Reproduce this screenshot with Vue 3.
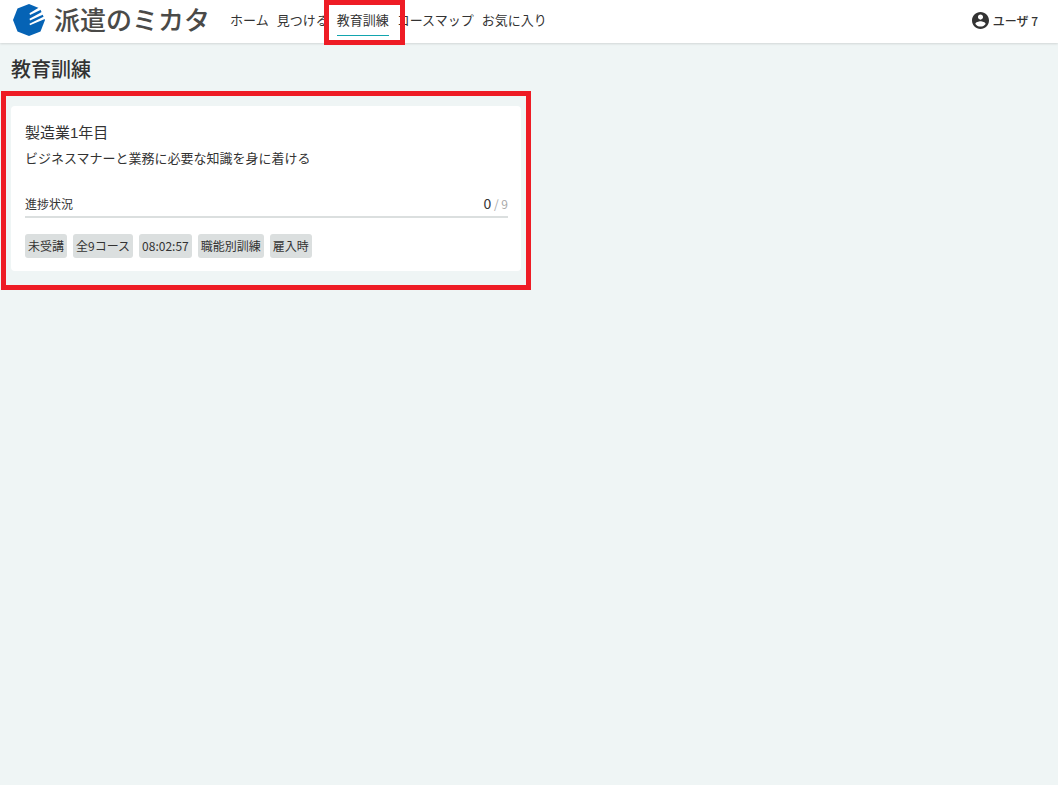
<script setup>
const navItems = [
  { label: 'ホーム' },
  { label: '見つける' },
  { label: '教育訓練', current: true },
  { label: 'コースマップ' },
  { label: 'お気に入り' },
]

const course = {
  title: '製造業1年目',
  description: 'ビジネスマナーと業務に必要な知識を身に着ける',
  done: 0,
  total: 9,
  tags: ['未受講', '全9コース', '08:02:57', '職能別訓練', '雇入時'],
}
</script>

<template>
  <div class="page">
    <header class="header">
      <a class="brand" href="#">
        <svg class="brand-mark" viewBox="0 0 34 34" aria-hidden="true">
          <path fill="#0563b5" d="M17 1 28 5.500 33 17 28.500 28.500 17 33 5.500 28.500 1 17 5.500 5.500Z" />
          <path
            fill="#fff"
            d="M17.500 10.200 29.500 3 32 5.200 18 12Z M17.500 15.700 32.500 7.500 34.500 10 18 17.500Z M17.500 20.700 34 12.500V15.500L18 22.300Z"
          />
        </svg>
        <span class="brand-name">派遣のミカタ</span>
      </a>
      <nav class="nav">
        <a
          v-for="item in navItems"
          :key="item.label"
          href="#"
          class="nav-link"
          :class="{ current: item.current }"
          :aria-current="item.current ? 'page' : undefined"
        >{{ item.label }}</a>
      </nav>
      <button class="user" type="button">
        <svg class="user-icon" viewBox="2 2 20 20" aria-hidden="true">
          <path
            fill="#333"
            d="M12 2C6.480 2 2 6.480 2 12s4.480 10 10 10 10-4.480 10-10S17.520 2 12 2zm0 3c1.660 0 3 1.340 3 3s-1.340 3-3 3-3-1.340-3-3 1.340-3 3-3zm0 14.200c-2.500 0-4.710-1.280-6-3.220.030-1.990 4-3.080 6-3.080 1.990 0 5.970 1.090 6 3.080-1.290 1.940-3.500 3.220-6 3.220z"
          />
        </svg>
        <span>ユーザ 7</span>
      </button>
    </header>

    <main class="main">
      <h1 class="heading">教育訓練</h1>
      <div class="courses">
        <article class="card">
          <h2 class="card-title">{{ course.title }}</h2>
          <p class="card-text">{{ course.description }}</p>
          <div class="status">
            <label for="course-progress">進捗状況</label>
            <span class="count"><span class="done">{{ course.done }}</span> / {{ course.total }}</span>
          </div>
          <progress id="course-progress" class="bar" :value="course.done" :max="course.total"></progress>
          <ul class="tags">
            <li v-for="tag in course.tags" :key="tag" class="tag">{{ tag }}</li>
          </ul>
        </article>
      </div>
    </main>
  </div>
</template>

<style>
body {
  margin: 0;
  background: #eff5f5;
}
</style>

<style scoped>
.page {
  min-height: 100vh;
  background: #eff5f5;
  color: #333;
  font-family: "Noto Sans CJK JP", "Noto Sans", sans-serif;
  font-size: 13px;
}

.header {
  display: flex;
  align-items: center;
  height: 43px;
  padding: 0 20px 0 12px;
  box-sizing: border-box;
  background: #fff;
  box-shadow: 0 1px 2px rgba(0, 0, 0, 0.12);
}

.brand {
  display: flex;
  align-items: center;
  gap: 8px;
  height: 40px;
  align-self: flex-start;
  color: #4a4a48;
  text-decoration: none;
}

.brand-mark {
  width: 34px;
  height: 34px;
}

.brand-name {
  padding-bottom: 2px;
  font-size: 26px;
  font-weight: 500;
  line-height: 38px;
  white-space: nowrap;
}

.nav {
  display: flex;
  gap: 8px;
  margin-left: 20px;
  align-self: flex-start;
}

.nav-link {
  position: relative;
  padding-top: 4px;
  line-height: 31px;
  color: #333;
  text-decoration: none;
  white-space: nowrap;
}

.nav-link.current {
  border-bottom: 1px solid #12a5ae;
}

.nav-link.current::after {
  content: "";
  position: absolute;
  top: 0;
  left: -13px;
  right: -16px;
  height: 35px;
  border: 5px solid #ee1c25;
  z-index: 1;
}

.user {
  display: flex;
  align-items: center;
  gap: 4px;
  height: 40px;
  margin-left: auto;
  padding: 0;
  align-self: flex-start;
  border: 0;
  background: none;
  color: #333;
  font-family: inherit;
  font-size: 12px;
  font-weight: 500;
  cursor: pointer;
}

.user-icon {
  width: 17px;
  height: 17px;
}

.main {
  padding: 11px;
}

.heading {
  margin: 0 0 22px;
  font-size: 20px;
  font-weight: 500;
  line-height: 30px;
}

.courses {
  display: grid;
  grid-template-columns: repeat(2, minmax(0, 1fr));
  gap: 16px;
}

.card {
  position: relative;
  padding: 14px 13px 13px 14px;
  border-radius: 4px;
  background: #fff;
}

.card::after {
  content: "";
  position: absolute;
  inset: -15px -10px -19px -10px;
  border: 5px solid #ee1c25;
  pointer-events: none;
}

.card-title {
  margin: 0;
  font-family: "Liberation Sans", "Noto Sans CJK JP", sans-serif;
  font-size: 15px;
  font-weight: 400;
  line-height: 26px;
}

.card-text {
  margin: 2px 0 22px;
  line-height: 20px;
}

.status {
  display: flex;
  align-items: center;
  justify-content: space-between;
  height: 26px;
  font-size: 12px;
}

.count {
  color: #aaa;
}

.done {
  color: #333;
  font-size: 14px;
}

.bar {
  display: block;
  width: 100%;
  height: 2px;
  appearance: none;
  border: 0;
  background: #dbdfdf;
}

.bar::-webkit-progress-bar {
  background: #dbdfdf;
}

.bar::-webkit-progress-value {
  background: #12a5ae;
}

.tags {
  display: flex;
  flex-wrap: wrap;
  gap: 6px;
  margin: 16px 0 0;
  padding: 0;
  list-style: none;
}

.tag {
  padding: 0 3px;
  border-radius: 3px;
  background: #dbdfdf;
  font-size: 12px;
  line-height: 24px;
}
</style>
